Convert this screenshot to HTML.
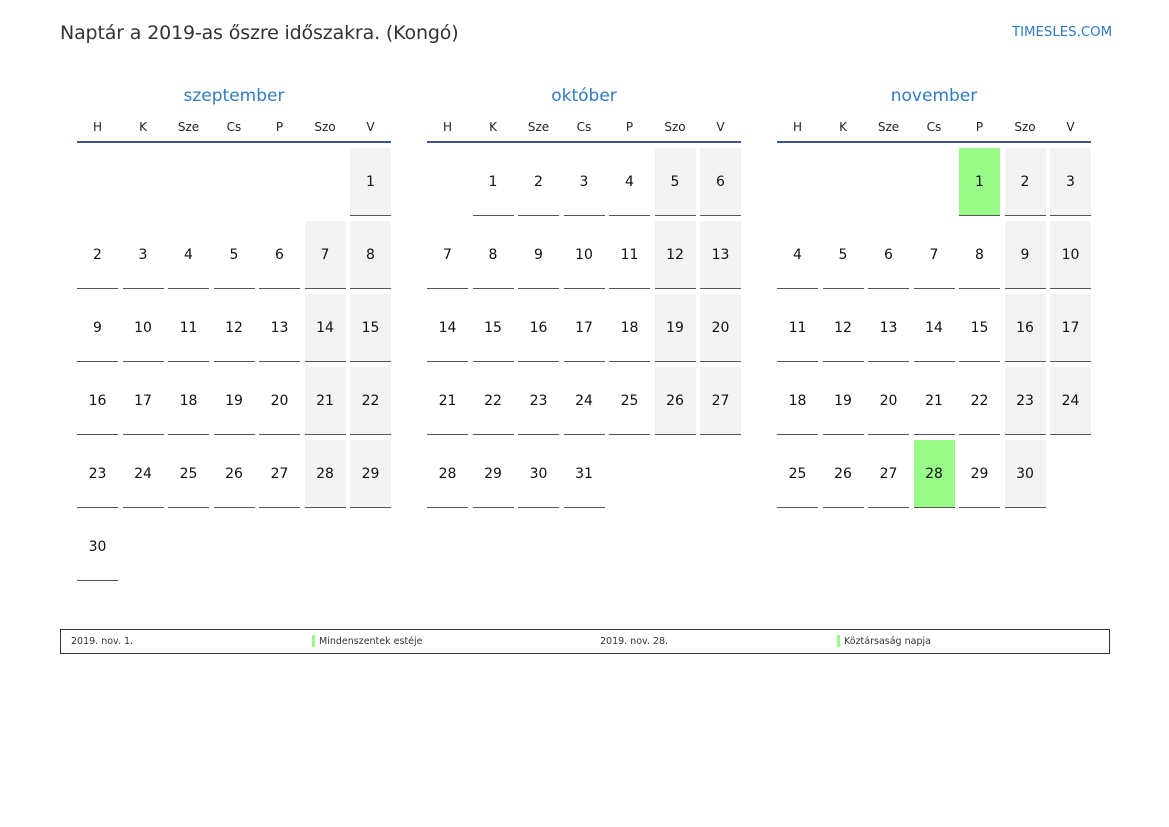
<!DOCTYPE html>
<html><head><meta charset="utf-8"><style>
body{margin:0;width:1169px;height:827px;background:#fff;font-family:"DejaVu Sans","Liberation Sans",sans-serif;position:relative;overflow:hidden}
.a{position:absolute}
.t{left:60px;top:22px;font-size:19px;color:#333;letter-spacing:-0.15px}
.logo{left:1012px;top:25px;font-size:13.3px;color:#2f7bc4}
.mt{font-size:17px;color:#2f7bc4;width:314px;text-align:center;top:86px}
.dh{font-size:12px;color:#222;width:41px;text-align:center;top:120px}
.ln{height:2px;background:#3b5a85;width:314px;top:141px}
.c{width:41px;height:67px;border-bottom:1px solid #555;text-align:center;line-height:69px;font-size:14px;color:#111}
.w{background:#f3f3f3}
.g{background:#99fb88}
.lg{left:60px;top:629px;width:1048px;height:23px;border:1px solid #333;font-size:9.5px;color:#333}
.lg span{position:absolute;top:6px}
.bar{position:absolute;top:5px;width:3px;height:12px;background:#99fb88}
</style></head><body>
<div class="a t">Naptár a 2019-as őszre időszakra. (Kongó)</div>
<div class="a logo">TIMESLES.COM</div>
<div class="lg a">
<span style="left:10px">2019. nov. 1.</span><div class="bar" style="left:251px"></div><span style="left:258px">Mindenszentek estéje</span>
<span style="left:539px">2019. nov. 28.</span><div class="bar" style="left:776px"></div><span style="left:783px">Köztársaság napja</span>
</div>
<div id="cal"></div>
<script>
var months=[["szeptember",6,30,[]],["október",1,31,[]],["november",4,30,[1,28]]];
var dh=["H","K","Sze","Cs","P","Szo","V"],h="";
months.forEach(function(m,mi){
 var x0=77+mi*350;
 h+='<div class="a mt" style="left:'+x0+'px">'+m[0]+'</div>';
 h+='<div class="a ln" style="left:'+x0+'px"></div>';
 dh.forEach(function(d,i){h+='<div class="a dh" style="left:'+(x0+i*45.5)+'px">'+d+'</div>';});
 for(var d=1;d<=m[2];d++){var p=m[1]+d-1,col=p%7,row=Math.floor(p/7);
  var cls='c'+(m[3].indexOf(d)>=0?' g':(col>=5?' w':''));
  h+='<div class="a '+cls+'" style="left:'+(x0+col*45.5)+'px;top:'+(148+row*73)+'px">'+d+'</div>';}
});
document.getElementById('cal').innerHTML=h;
</script>
</body></html>
